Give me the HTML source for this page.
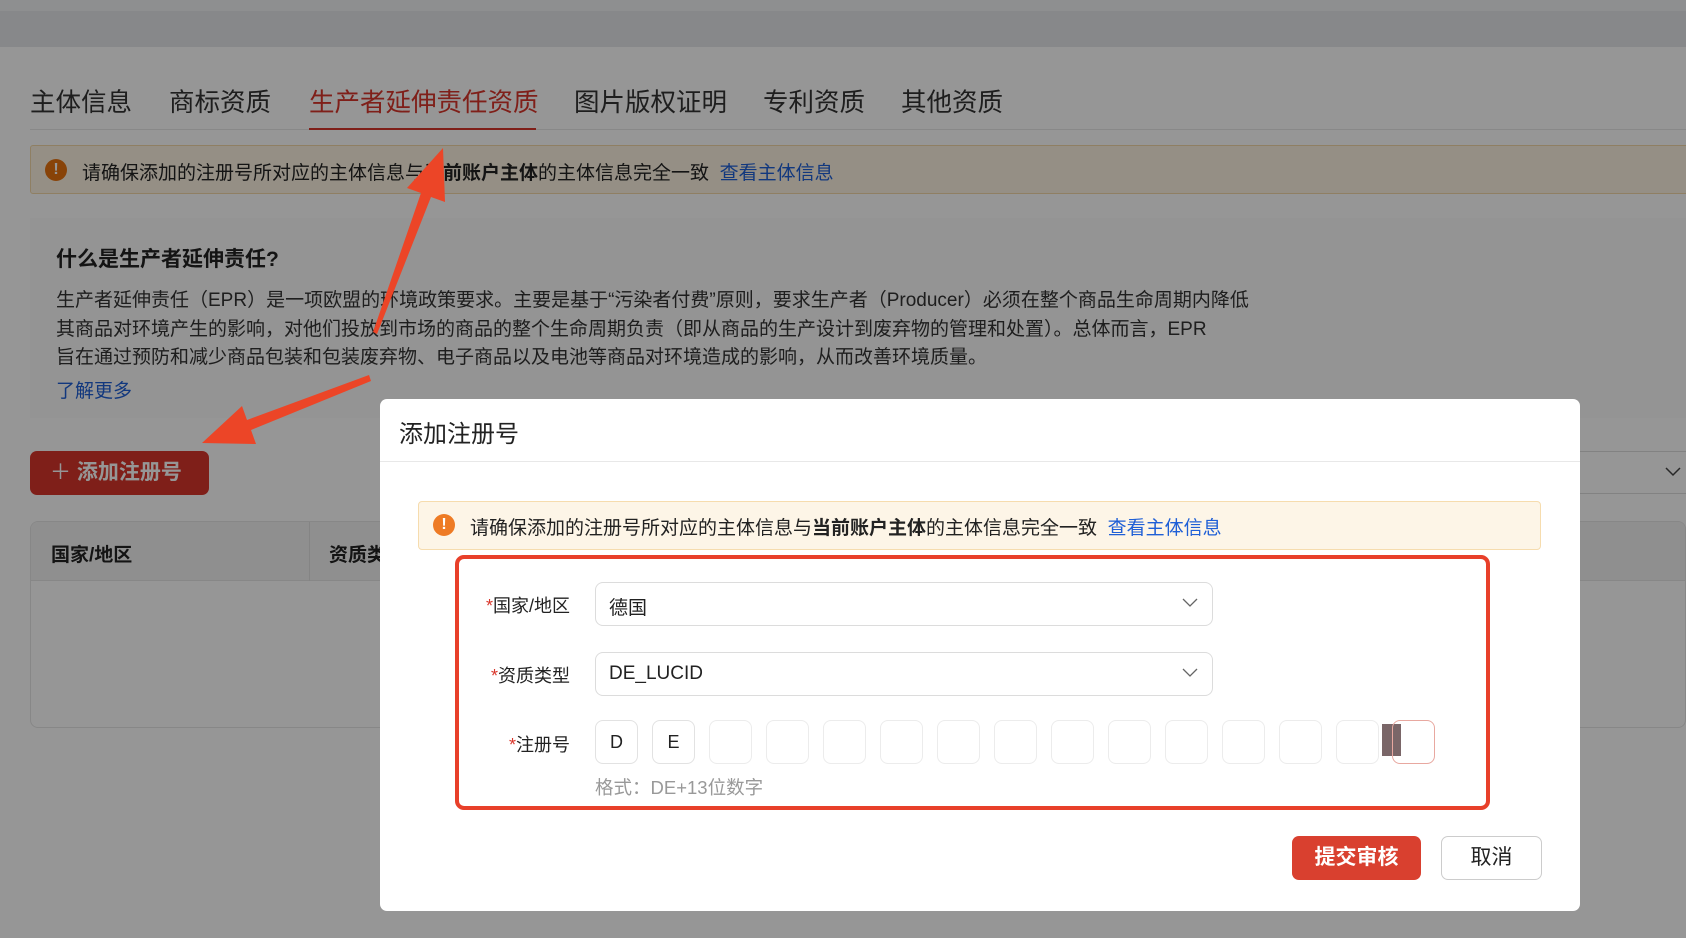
<!DOCTYPE html>
<html><head><meta charset="utf-8">
<style>
*{box-sizing:border-box;margin:0;padding:0}
body{width:1686px;height:938px;overflow:hidden;position:relative;background:#fff;font-family:"Liberation Sans","Noto Sans CJK SC",sans-serif;color:#222}
.abs{position:absolute}
.page{position:absolute;left:0;top:0;width:1686px;height:938px;background:#fff}
.tab{position:absolute;top:82px;font-size:25.5px;color:#333;white-space:nowrap}
.mask{position:absolute;left:0;top:0;width:1686px;height:938px;background:rgba(0,0,0,0.41)}
.lab{position:absolute;font-size:18px;color:#222;text-align:right;width:200px;left:370px}
.lab i{color:#d9362b;font-style:normal}
.sel{position:absolute;left:595px;width:618px;height:44px;border:1px solid #dcdcdc;border-radius:8px;font-size:19px;padding:10px 13px;color:#222}
.sel svg{position:absolute;right:14px;top:15px}
.box{position:absolute;top:720px;width:43px;height:44px;border:1px solid #ececec;border-radius:8px;font-size:18px;text-align:center;line-height:42px;color:#222}
</style></head><body>
<div class="page">
  <div class="abs" style="left:0;top:0;width:1686px;height:11px;background:#f2f3f5"></div>
  <div class="abs" style="left:0;top:11px;width:1686px;height:36px;background:#e6e7ea"></div>
  <div class="tab" style="left:30px">主体信息</div>
  <div class="tab" style="left:169px">商标资质</div>
  <div class="tab" style="left:309px;color:#d9362b">生产者延伸责任资质</div>
  <div class="tab" style="left:574px">图片版权证明</div>
  <div class="tab" style="left:763px">专利资质</div>
  <div class="tab" style="left:901px">其他资质</div>
  <div class="abs" style="left:30px;top:129px;width:1656px;height:1px;background:#e8e8e8"></div>
  <div class="abs" style="left:309px;top:128px;width:227px;height:2px;background:#d9362b"></div>
  <div class="abs" style="left:30px;top:145px;width:1660px;height:49px;background:#fdf4e3;border:1px solid #f3d9a8;border-radius:3px"></div>
  <div class="abs" style="left:45px;top:159px;width:22px;height:22px;border-radius:50%;background:#e8730f;color:#fff;font-weight:bold;font-size:16px;text-align:center;line-height:22px">!</div>
  <div class="abs" style="left:82px;top:158px;font-size:19px;white-space:nowrap">请确保添加的注册号所对应的主体信息与<b>当前账户主体</b>的主体信息完全一致 &nbsp;<span style="color:#1f5fd6">查看主体信息</span></div>
  <div class="abs" style="left:30px;top:218px;width:1656px;height:200px;background:#fbfbfb"></div>
  <div class="abs" style="left:56px;top:243px;font-size:21px;font-weight:bold;white-space:nowrap">什么是生产者延伸责任?</div>
  <div class="abs" style="left:56px;top:287px;font-size:19px;line-height:28.5px;white-space:nowrap;color:#333">生产者延伸责任（EPR）是一项欧盟的环境政策要求。主要是基于“污染者付费”原则，要求生产者（Producer）必须在整个商品生命周期内降低<br>其商品对环境产生的影响，对他们投放到市场的商品的整个生命周期负责（即从商品的生产设计到废弃物的管理和处置）。总体而言，EPR<br>旨在通过预防和减少商品包装和包装废弃物、电子商品以及电池等商品对环境造成的影响，从而改善环境质量。</div>
  <div class="abs" style="left:56px;top:376px;font-size:19px;color:#1f5fd6">了解更多</div>
  <div class="abs" style="left:30px;top:451px;width:179px;height:44px;background:#d9362b;border-radius:7px;color:#fff;font-size:21px;font-weight:bold;line-height:44px;padding-left:20px;white-space:nowrap"><span style="font-weight:normal">＋</span> 添加注册号</div>
  <div class="abs" style="left:1580px;top:451px;width:106px;height:43px;border-top:1px solid #ddd;border-bottom:1px solid #ddd"></div>
  <svg class="abs" style="left:1664px;top:466px" width="18" height="12"><path d="M2 2 L9 9 L16 2" fill="none" stroke="#444" stroke-width="1.5"/></svg>
  <div class="abs" style="left:30px;top:521px;width:1656px;height:207px;border:1px solid #e6e6e6;border-radius:8px;overflow:hidden">
    <div style="height:59px;background:#f3f3f3;border-bottom:1px solid #e6e6e6;position:relative">
      <div class="abs" style="left:20px;top:18px;font-size:19px;font-weight:bold">国家/地区</div>
      <div class="abs" style="left:278px;top:0;width:1px;height:59px;background:#e0e0e0"></div>
      <div class="abs" style="left:298px;top:18px;font-size:19px;font-weight:bold">资质类型</div>
    </div>
  </div>
</div>
<div class="mask"></div>
<svg class="abs" style="left:0;top:0" width="1686" height="938">
  <polygon points="377,334 431,197 445,202 443,148 407,188 421,193 373,332" fill="#ec4527"/>
  <polygon points="371,381 251,430 256,444 202,443 242,406 247,420 369,375" fill="#ec4527"/>
</svg>
<div class="abs" style="left:380px;top:399px;width:1200px;height:512px;background:#fff;border-radius:7px">
  <div class="abs" style="left:19px;top:15px;font-size:24px;color:#222">添加注册号</div>
  <div class="abs" style="left:0;top:62px;width:1200px;height:1px;background:#e8e8e8"></div>
  <div class="abs" style="left:38px;top:102px;width:1123px;height:49px;background:#fdf5e7;border:1px solid #f6dcae;border-radius:4px"></div>
  <div class="abs" style="left:53px;top:115px;width:22px;height:22px;border-radius:50%;background:#ee7b25;color:#fff;font-weight:bold;font-size:16px;text-align:center;line-height:22px">!</div>
  <div class="abs" style="left:90px;top:114px;font-size:19px;white-space:nowrap">请确保添加的注册号所对应的主体信息与<b>当前账户主体</b>的主体信息完全一致 &nbsp;<span style="color:#1f5fd6">查看主体信息</span></div>
</div>
<div class="abs" style="left:455px;top:555px;width:1035px;height:255px;border:4px solid #e8402a;border-radius:9px"></div>
<div class="lab" style="top:592px"><i>*</i>国家/地区</div>
<div class="lab" style="top:662px"><i>*</i>资质类型</div>
<div class="lab" style="top:731px"><i>*</i>注册号</div>
<div class="sel" style="top:582px">德国<svg width="16" height="10"><path d="M1 1 L8 8 L15 1" fill="none" stroke="#666" stroke-width="1.3"/></svg></div>
<div class="sel" style="top:652px">DE_LUCID<svg width="16" height="10"><path d="M1 1 L8 8 L15 1" fill="none" stroke="#666" stroke-width="1.3"/></svg></div>
<div class="box" style="left:595px;border-color:#e2e2e2">D</div>
<div class="box" style="left:652px;border-color:#e2e2e2">E</div>
<div class="box" style="left:709px"></div><div class="box" style="left:766px"></div><div class="box" style="left:823px"></div><div class="box" style="left:880px"></div><div class="box" style="left:937px"></div><div class="box" style="left:994px"></div><div class="box" style="left:1051px"></div><div class="box" style="left:1108px"></div><div class="box" style="left:1165px"></div><div class="box" style="left:1222px"></div><div class="box" style="left:1279px"></div><div class="box" style="left:1336px"></div>
<div class="abs" style="left:1382px;top:724px;width:19px;height:32px;background:#7a6668"></div>
<div class="box" style="left:1392px;border-color:#e8a8a0;background:transparent"></div>
<div class="abs" style="left:595px;top:774px;font-size:18.5px;color:#999">格式：DE+13位数字</div>
<div class="abs" style="left:1292px;top:836px;width:129px;height:44px;background:#d9402f;border-radius:7px;color:#fff;font-size:21px;font-weight:bold;text-align:center;line-height:44px">提交审核</div>
<div class="abs" style="left:1441px;top:836px;width:101px;height:44px;border:1px solid #ccc;border-radius:7px;font-size:21px;text-align:center;line-height:42px;color:#222">取消</div>
</body></html>
